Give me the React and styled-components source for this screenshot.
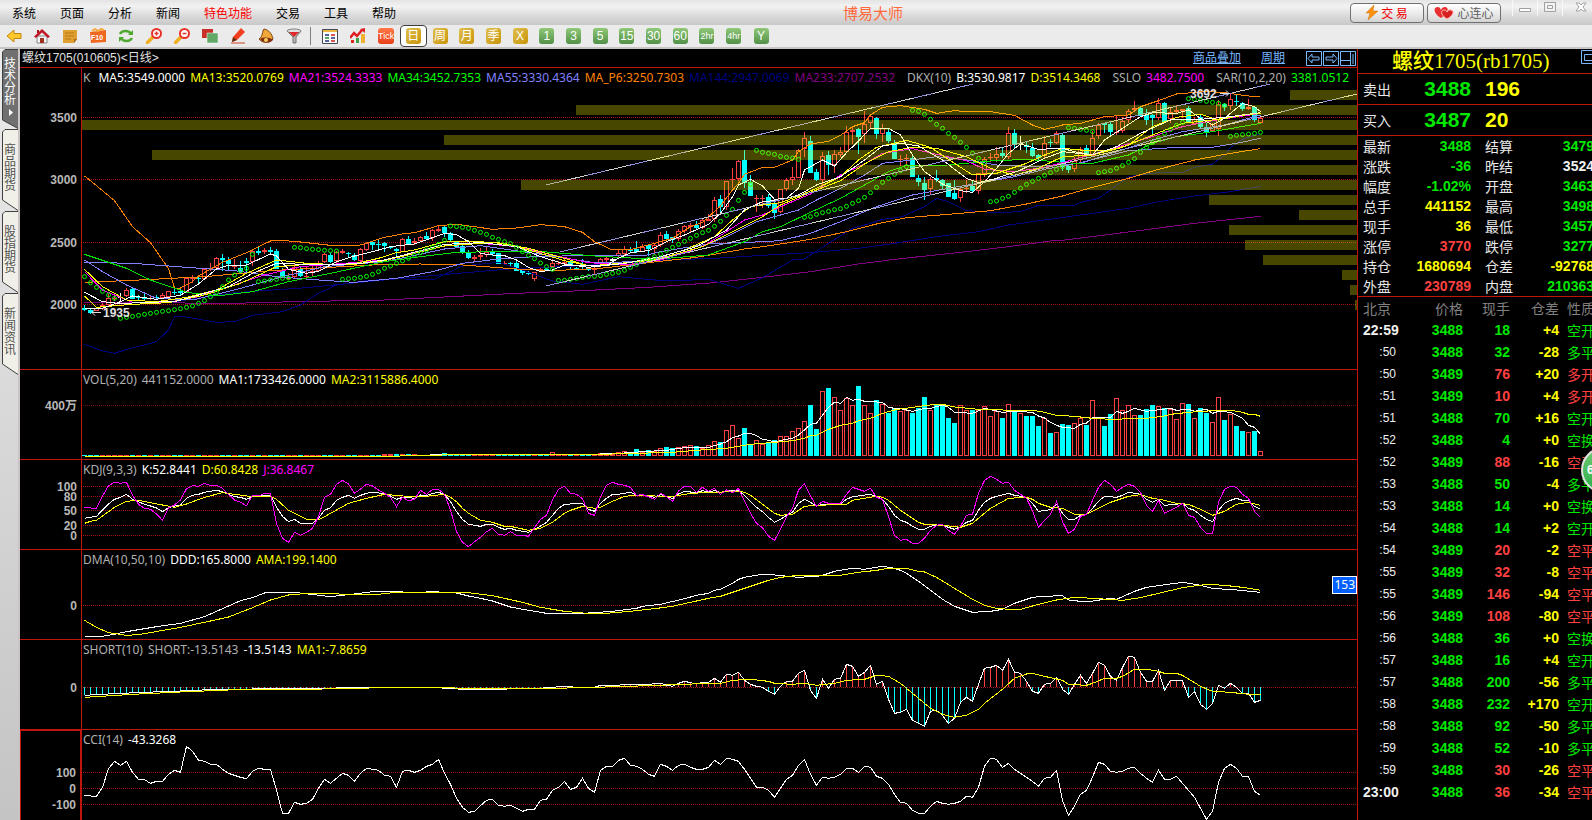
import React from "react";
import styled, { createGlobalStyle } from "styled-components";

const RED = "#c0140c";
const CJK = '"Noto Sans CJK SC", sans-serif';
const LEGEND = '"Noto Sans", sans-serif';

const GlobalStyle = createGlobalStyle`
  * {
    box-sizing: border-box;
  }
  body {
    margin: 0;
    background: #000;
    overflow: hidden;
    font-family: "Liberation Sans", ${CJK};
    font-size: 12px;
  }
  button {
    font-family: inherit;
    padding: 0;
    margin: 0;
    border: 0;
    background: none;
    cursor: pointer;
  }
`;

/* ---------- data ---------- */

// A series is a string of levels in thirds of a pixel, one per bar.
// "12:340" jumps to bar 12, the next plain value belongs to bar 13.
const parse = (text) => {
  let i = -1;
  return text
    .trim()
    .split(/\s+/)
    .map((token) => {
      const [a, b] = token.split(":");
      i = b === undefined ? i + 1 : Number(a);
      return [i, Number(b === undefined ? a : b)];
    });
};

const barX = (i) => 2 + i * 6;

const candles = `
c 735 743 750 753|c 747 750 758 762|r 742 745 752 754|r 730 735 747 750|r 702 715 735 740|r 705 714 718 724|w 700 710 712 725|r 683 691 708 710|c 683 687 716 718|c 704 712 714 720
c 698 713 716 720|r 708 714 718 720|c 704 711 714 716|r 698 706 714 716|r 692 694 712 712|c 688 696 700 704|c 684 693 700 708|r 650 653 697 697|r 645 652 656 668|c 644 653 657 668
r 623 626 656 660|r 610 623 628 632|r 590 595 623 625|c 582 595 601 634|c 592 600 613 630|r 598 615 622 626|c 602 624 636 640|c 595 603 610 640|r 566 572 606 618|c 562 572 578 585
r 565 571 577 582|c 560 569 576 578|c 568 573 627 627|c 624 632 650 652|r 640 650 656 660|r 612 620 650 655|c 622 626 648 650|r 622 648 652 656|r 610 633 636 648|r 602 608 633 636
r 578 583 607 610|c 580 584 606 610|r 574 577 604 610|r 568 574 580 582|c 575 578 583 595|c 580 584 601 603|r 563 568 604 608|r 546 548 570 572|c 545 545 555 570|c 540 551 555 568
c 547 549 558 575|c 558 560 565 566|c 565 568 574 592|r 533 538 575 577|c 528 538 551 553|r 534 542 549 556|r 528 530 543 547|c 515 528 537 540|r 508 511 535 543|r 497 507 512 516
c 497 501 520 530|c 516 519 541 545|c 543 546 560 562|c 555 559 580 582|c 570 577 593 598|r 585 590 598 606|r 563 585 590 600|r 562 576 586 590|c 568 576 581 588|c 578 580 611 612
r 603 608 612 615|c 606 610 613 620|c 603 609 632 634|c 628 630 640 645|c 632 639 642 646|r 635 637 656 663|r 624 628 634 636|c 622 627 630 632|r 597 610 622 625|r 604 608 612 614
r 596 606 612 615|c 600 604 622 626|c 620 623 626 628|c 596 612 616 628|c 620 621 630 632|r 622 625 630 644|r 595 598 614 620|r 592 594 599 615|w 594 598 602 606|r 568 580 588 594
r 558 567 582 584|c 562 566 573 578|c 543 567 576 580|r 552 560 575 576|c 554 556 568 588|r 552 556 568 585|r 516 524 556 560|c 513 522 536 545|c 530 532 541 548|r 508 512 538 542
r 496 498 512 518|r 490 496 500 516|c 483 495 504 508|r 478 480 503 506|r 462 477 482 484|r 412 421 478 486|c 405 417 441 458|r 363 364 440 450|r 324 357 360 384|r 300 303 356 362
c 270 300 370 385|c 345 365 408 408|r 405 415 418 457|r 405 413 418 443|c 403 412 438 444|c 425 432 458 476|r 386 388 455 458|r 354 361 386 394|r 320 351 360 376|r 268 271 353 355
r 216 235 266 292|c 227 243 339 339|c 328 335 360 362|r 277 288 361 375|c 273 285 316 344|r 270 283 315 338|r 262 276 284 290|r 198 216 276 278|r 198 210 215 253|c 203 207 230 283
r 152 192 222 250|r 164 168 188 205|c 170 174 222 237|r 192 204 222 245|c 205 215 243 250|c 240 250 298 298|r 285 296 300 318|r 282 293 297 316|c 285 293 350 350|c 345 353 366 377
c 352 369 389 420|r 350 357 386 406|c 330 354 361 366|c 357 360 377 390|c 368 370 411 411|c 360 398 416 420|r 380 386 414 426|r 360 384 388 400|c 360 378 394 396|r 338 340 393 402
r 292 296 341 350|r 280 290 294 307|r 262 281 294 305|c 265 278 288 295|r 200 219 290 296|c 207 219 254 268|w 228 250 252 270|c 246 254 262 278|c 248 263 288 290|c 282 285 293 302
r 228 250 289 297|c 236 246 248 262|r 214 220 250 252|c 222 226 320 332|c 312 317 330 338|r 292 304 326 335|r 262 267 300 306|c 256 264 286 294|r 214 235 288 292|r 190 195 227 237
c 188 190 194 220|c 187 192 216 232|r 168 216 220 226|r 172 182 212 220|r 148 154 180 188|r 122 144 150 156|c 138 144 168 172|c 146 165 180 196|c 162 164 174 222|r 114 129 174 180
c 125 129 185 188|r 142 156 176 188|r 136 149 155 162|r 146 148 154 174|c 138 144 185 190|r 172 176 192 195|c 162 170 202 205|c 190 201 216 232|r 190 192 212 216|r 120 132 206 228
c 128 132 141 152|r 98 117 137 150|c 104 122 126 138|c 125 129 147 152|r 116 141 148 150|c 138 140 180 186|r 170 174 188 190`
  .trim()
  .split(/[|\n]/)
  .map((row) => {
    const [kind, ...levels] = row.split(" ");
    return { kind, levels: levels.map(Number) };
  });

const priceLines = [
  { color: "#800080", data: "0:727 25:730 35:725 50:720 61:710 72:700 83:692 94:682 105:668 113:652 121:635 129:612 135:598 146:577 154:560 161:543 163:541 174:516 185:490 196:469" },
  { color: "#000080", data: "14:728 25:698 37:683 50:660 61:642 72:625 80:620 89:610 97:600 105:595 113:586 121:578 129:565 135:550 142:530 149:515 154:495 160:480 168:460 174:445 179:425 185:408 191:395 196:379" },
  { color: "#000080", data: "0:853 3:873 5:880 7:868 11:850 12:845 14:810 15:770 16:768 22:787 25:785 28:766 33:755 36:735 39:700 42:675 47:662 52:656 58:660 63:618 69:607 73:630 78:663 83:673 89:650 97:663 104:658 109:685 113:653 118:600 120:597 124:550 128:505 131:490 133:478 136:472 140:440 142:415 144:425 147:452 152:458 156:455 159:436 165:436 166:427 169:415 171:390 174:350 179:338 183:338 185:322 188:312 190:285 191:262 193:238 195:226 224" },
  { color: "#ff8000", data: "0:667 8:661 20:650 31:632 43:620 50:613 56:612 63:615 72:627 78:632 86:625 94:608 102:592 110:567 113:560 116:552 121:538 127:515 132:492 137:473 144:463 151:452 157:432 163:408 168:382 174:355 179:328 185:300 191:280 196:266" },
  { color: "#ff8000", data: "0:348 362 5:422 8:500 11:548 14:626 684 684 18:665 19:648 23:607 27:578 31:543 541 35:544 42:558 46:555 50:532 53:522 55:518 57:508 59:497 62:493 65:500 68:508 72:504 76:494 80:500 83:517 85:545 88:570 91:569 95:550 98:535 101:500 103:487 104:470 106:438 108:390 109:370 110:343 113:322 115:322 118:300 119:275 121:252 124:244 126:226 128:200 130:188 131:165 133:142 136:137 140:148 142:160 145:152 147:155 151:155 155:166 158:195 160:208 162:200 195 166:190 170:170 174:165 176:140 179:122 182:102 187:94 190:98 194:108 196:109" },
  { color: "#8080ff", data: "0:607 8:610 17:622 25:632 32:650 39:660 45:667 52:655 58:635 63:610 69:597 75:590 82:587 93:588 96:575 104:552 113:545 116:542 121:520 126:485 132:440 138:405 144:385 149:370 155:350 160:328 166:308 170:290 174:272 182:262 188:262 192:250 196:235" },
  { color: "#8080ff", data: "0:600 3:635 7:675 12:715 18:720 25:690 33:650 40:620 50:605 60:567 66:557 75:580 85:608 92:605 100:580 107:530 112:485 116:465 119:450 122:420 126:385 130:345 133:310 137:302 142:290 147:300 152:315 158:320 166:310 172:275 178:240 183:215 190:195 196:165" },
  { color: "#00e000", data: "0:583 7:625 11:660 17:697 22:708 28:695 34:665 41:640 50:605 56:590 62:577 75:573 85:588 95:598 104:585 110:545 113:515 116:500 121:457 126:415 130:375 134:335 137:316 144:315 151:303 157:298 165:310 168:310 174:285 178:250 182:230 188:215 196:190" },
  { color: "#ff00ff", data: "0:635 3:690 5:705 8:727 14:727 19:710 24:680 30:645 36:620 42:612 50:600 60:558 66:550 72:560 78:585 84:608 90:615 96:600 103:560 107:515 110:480 113:465 116:440 121:402 126:345 130:312 133:280 138:266 142:283 147:302 150:328 155:335 160:322 163:308 168:283 172:262 177:235 183:200 188:182 196:160" },
  { color: "#ffff00", data: "0:708 2:742 8:733 14:728 20:705 26:670 32:620 38:612 44:615 50:602 60:558 68:547 74:565 80:595 84:618 88:612 95:600 103:560 108:515 113:470 116:435 121:397 126:362 130:312 134:275 138:262 142:265 147:290 151:325 155:346 159:325 163:290 168:285 173:262 178:225 183:190 188:180 196:158" },
  { color: "#ffff00", data: "0:628 3:680 7:720 12:725 17:712 22:690 27:640 32:600 37:610 44:615 49:595 52:578 55:570 60:545 64:543 70:550 75:575 80:602 85:620 90:610 95:595 100:570 105:530 108:480 111:440 116:428 119:408 122:385 126:350 129:300 132:262 137:241 141:262 145:310 148:345 152:340 157:310 160:285 163:265 166:270 171:270 174:255 178:200 182:172 186:163 189:180 193:165 196:160" },
  { color: "#ffffff", data: "0:697 3:725 6:731 10:727 15:725 19:705 24:680 28:640 32:610 35:612 40:615 46:610 50:600 60:553 66:548 72:560 76:590 80:612 84:622 90:610 96:590 102:560 107:510 110:450 113:425 116:420 119:405 122:375 126:350 130:300 133:258 136:250 139:258 143:300 147:355 149:368 152:355 156:330 160:295 163:275 168:285 172:260 176:220 181:180 186:178 190:172 196:158" },
  { color: "#ffffff", data: "0:744 3:745 6:725 8:708 12:718 16:706 19:672 22:627 24:616 27:615 31:582 588 34:628 37:640 39:634 42:605 45:588 48:575 51:560 55:552 58:533 60:520 62:524 64:545 66:580 68:585 70:587 72:600 74:622 76:635 78:630 80:615 84:618 87:616 89:595 91:578 94:572 97:545 100:525 104:493 106:460 108:410 375 111:358 113:378 115:418 117:415 119:385 330 122:310 300 125:318 127:278 129:243 131:205 134:205 136:225 138:285 140:335 143:372 146:392 148:397 150:365 152:325 154:280 156:252 159:268 163:265 165:275 168:285 170:240 173:205 176:170 178:158 182:160 184:150 186:175 188:195 190:175 192:145 131 195:140 155" },
];

const sar = `650 668 682 694 705 715 775 772 769 766 763 760 757 754 752 749 746 742 738 730 722 710 697 680 660 645 633 625 583 665 663 660 658 655 654
562 563 566 568 569 571 572 573 658 656 655 652 649 643 635 625 618 610 603 595 586 578 570 562 553 541 498 500 502 505 511 517 523 532 538 545 551 562 575 586 596 609 620 628
661 661 658 655 652 649 649 647 643 640 637 631 622 613 604 598 590 582 571 562 553 544 535 526 518 511 499 484 466 448 421 397 373 271 277 280 283 289 292 294 298
472 470 463 458 454 449 446 439 430 422 412 398 382 367 355 343 332 320 151 154 163 178 193 205 220 232 247 262 280 295 308 425 423 415 409 397 385 373 364 355 346 338 328 320
203 205 208 211 215 338 335 332 325 317 307 296 277 262 248 236 220 209 196 187 116 118 121 124 127 130 137 229 226 224 222 220 217`;

// [top of the band, x where it starts]
const bands = [
  [22, 1208], [37, 494], [52, 0], [67, 362], [82, 70], [97, 774], [112, 439], [127, 1127],
  [142, 1217], [157, 1147], [172, 1163], [187, 1181], [202, 1260], [217, 1268], [232, 1273],
];

const trends = [
  [464, 117, 891, 16],
  [478, 184, 1188, 16],
  [464, 218, 1275, 26],
];

const volumes = `c255 c255 c255 r255 r255 r255 r255 r255 c255 r255 c255 r255 c255 r255 r255 c255 c255 r255 r255 c255 r255 r255 r255 c255 c255 r255 c255 c255 r255 c255
r255 c255 c255 c255 r255 r255 c255 r255 r255 r255 c255 c255 r255 r255 c255 c255 r254 r254 c254 c254 r253 r253 c253 r252 c253 r252 c254 c254 r254 r253 c250 c254
c254 c254 c254 r254 r252 r254 r254 c254 c254 c253 c253 c253 c253 r253 c253 c253 r247 r253 r253 c253 r253 c253 c253 r253 r250 r250 r252 r247 r244 c248
c237 r246 c240 r244 r235 c231 c235 r232 r229 r226 c229 r235 r226 r214 c216 r181 r166 r205 c174 c223 r211 r221 c217 c211 r199 r199 r184 r175 r154 c105
c177 r64 c54 r82 r121 r83 r106 c48 r106 r130 c90 r103 c129 c117 r124 r121 c129 c114 c81 r121 c103 c105 c144 c159 r106 r121 c120 r121 r109 r139
r124 c144 r103 c124 r130 c138 c138 c168 r145 c189 r187 c162 c165 r160 r145 c165 r91 r142 c168 c132 r85 r121 r106 r136 c135 c117 c105 r109 c114 r118
r148 r100 c102 r145 c114 c129 r157 r82 c150 r133 c168 c183 r187 c183 r244`
  .trim()
  .split(/\s+/)
  .slice(-197)
  .map((token) => [token[0], Number(token.slice(1))]);

const volLines = [
  { color: "#ffffff", data: "0:260 52:260 53:257 60:254 86:252 90:249 93:245 97:241 100:233 104:232 106:222 215 203 198 190 190 197 208 211 216 212 208 205 195 180 163 160 135 112 97 100 82 91 88 94 94 96 97 112 115 116 138:124 140:115 141:115 143:105 144:112 145:127 148:130 150:115 153:127 155:124 158:127 138 144 157 166 172 165:175 166:163 159 144 171:142 124 130 124 115 177:124 181:115 121 184:118 124 187:118 130 124 191:127 193:145 166 172 193" },
  { color: "#ffff00", data: "0:260 52:260 53:257 63:254 86:253 92:250 98:247 102:241 107:235 111:223 115:217 118:212 120:205 197 196 124:178 126:166 128:160 152 131:145 133:130 135:120 117 138:112 140:107 142:103 103 145:111 149:118 155:121 158:121 160:127 162:136 165:139 168:145 171:148 177:145 180:138 133 184:127 188:122 191:121 193:127 133 133 139" },
];

const kdjLines = [
  { color: "#ffffff", data: "445 442 439 420 402 388 382 373 388 395 403 408 414 425 413 408 405 385 376 373 367 364 361 365 373 380 382 388 380 379 377 375 412 439 455 448 460 460 460 445 421 413 391 382 376 385 376 370 367 369 372 378 388 382 383 385 375 376 371 367 373 395 425 448 463 466 469 463 463 472 478 475 481 484 487 478 468 457 436 415 403 83:400 418 424 400 385 373 373 91:367 376 376 95:382 374 379 386 372 364 102:368 362 366 362 367 363 109:362 376 394 412 425 442 457 448 436 427 400 388 397 408 403 126:402 388 380 131:373 380 388 409 436 451 457 469 478 478 469 466 466 472 478 470 457 451 421 397 385 379 154:370 376 157:382 400 424 161:419 403 430 448 448 436 433 415 394 379 172:382 376 367 176:373 388 397 388 406 182:403 400 415 421 436 448 455 421 400 391 385 391 391 409 418" },
  { color: "#ffff00", data: "0:460 454 451 5:412 7:394 9:391 13:405 15:412 17:402 20:382 23:368 25:373 28:380 31:378 388 34:421 37:448 39:450 41:430 44:400 47:385 50:373 53:378 57:379 60:373 382 395 415 430 66:451 68:457 70:469 469 74:481 76:475 78:457 80:430 421 83:409 85:415 412 88:394 90:379 92:376 98:380 101:370 105:367 109:364 367 376 113:403 115:430 436 118:433 120:409 122:406 127:403 391 130:385 132:379 382 391 136:421 139:457 463 143:466 146:472 148:460 151:415 154:385 157:382 388 400 161:412 163:415 165:433 167:433 169:415 171:397 174:379 176:374 178:385 180:391 182:400 184:403 186:418 188:436 190:424 192:403 194:397 196:406" },
  { color: "#ff00ff", data: "412 414 415 378 347 337 340 337 375 403 415 418 432 451 413 405 390 356 347 349 340 347 346 355 373 390 397 407 376 378 370 370 460 505 517 487 496 487 475 440 382 373 343 331 342 370 357 343 348 360 370 382 410 382 392 388 361 373 358 358 373 420 485 517 530 515 502 485 475 493 496 485 496 496 499 473 448 436 390 358 349 370 373 386 430 436 380 346 337 343 346 352 376 374 380 388 370 380 394 363 349 349 367 352 364 355 373 360 368 355 394 430 460 473 499 511 478 440 415 360 341 378 409 394 400 400 400 373 352 358 364 355 382 388 440 496 511 508 520 520 505 481 466 463 481 493 469 436 433 370 331 319 328 340 337 361 373 385 422 472 451 433 395 455 490 478 439 433 391 352 331 343 364 352 343 349 367 406 424 391 430 421 412 400 436 442 472 490 490 397 358 349 352 373 385 424 442" },
];

const dmaLines = [
  { color: "#ffffff", data: "0:799 3:799 5:793 7:785 12:770 16:760 20:740 24:708 26:692 28:683 30:669 667 35:667 41:680 45:672 48:665 52:665 55:668 58:665 62:669 64:678 66:685 68:693 71:711 74:721 77:730 84:729 88:724 92:715 709 96:703 100:686 102:676 104:670 661 658 108:640 628 622 113:613 115:615 119:622 122:619 616 125:604 128:595 130:598 133:589 135:595 601 610 139:634 143:688 145:709 148:727 151:724 153:718 155:700 158:682 160:679 163:677 164:690 166:694 696 171:685 688 175:664 177:652 179:647 183:637 186:646 188:655 192:660 196:667" },
  { color: "#ffff00", data: "0:751 2:772 4:788 7:796 9:794 16:772 20:757 24:741 28:713 31:690 34:675 36:672 41:670 43:673 49:673 52:667 57:667 62:667 64:668 68:677 70:685 73:697 76:712 80:724 83:729 87:730 91:724 95:716 98:709 101:697 104:685 106:679 109:661 112:643 114:631 116:622 119:616 126:616 129:607 132:601 134:595 137:595 139:604 606 142:622 145:655 148:688 150:706 152:715 154:718 156:718 159:703 162:690 165:682 168:685 173:691 176:683 179:670 183:653 187:643 190:646 193:652 196:661" },
];

const shortLines = [
  { color: "#ffffff", data: "0:976 5:971 10:967 16:963 22:958 28:957 38:956 42:954 48:952 58:952 62:957 66:958 75:956 80:949 82:952 85:952 946 89:946 943 945 94:943 96:940 945 949 940 934 102:942 937 937 925 937 913 916 907 931 943 949 952 964 973 949 934 934 910 901 961 985 928 955 928 925 883 889 919 907 886 943 934 988 1030 1027 1018 1051 1060 1069 1024 1021 1036 1060 1045 997 982 994 943 895 892 886 901 868 907 910 934 964 970 943 940 922 958 973 943 916 940 910 877 886 919 931 892 859 862 907 934 934 901 961 931 931 931 982 964 1003 1018 1000 946 955 940 952 970 970 997 991" },
  { color: "#ffff00", data: "0:982 8:973 16:966 24:960 32:958 40:957 50:953 60:953 65:956 76:956 85:952 96:946 99:943 106:940 108:931 111:928 114:934 940 118:943 120:940 122:946 125:940 127:931 130:928 132:916 134:919 136:940 138:970 141:1015 143:1033 145:1042 147:1036 149:1018 1000 153:958 155:925 157:912 910 160:919 163:931 943 167:946 940 170:925 172:925 919 175:898 177:898 179:904 910 182:910 916 186:949 188:964 191:967 194:973 196:973" },
];

const cciLines = [
  { color: "#ffffff", data: "1276 1278 1279 1252 1196 1174 1186 1174 1207 1228 1229 1240 1234 1234 1213 1201 1207 1129 1144 1171 1174 1183 1183 1198 1210 1216 1222 1226 1204 1195 1198 1199 1260 1330 1330 1297 1303 1300 1288 1255 1228 1240 1225 1210 1216 1234 1210 1195 1198 1201 1216 1219 1252 1204 1201 1207 1201 1189 1183 1168 1210 1243 1285 1312 1327 1324 1307 1291 1288 1306 1309 1306 1315 1324 1318 1318 1291 1288 1261 1252 1235 1258 1252 1225 1255 1267 1201 1189 1189 1171 1165 1186 1189 1198 1213 1219 1183 1189 1201 1186 1183 1192 1198 1198 1192 1171 1183 1165 1168 1174 1198 1225 1252 1252 1261 1282 1255 1228 1216 1186 1168 1213 1246 1222 1225 1222 1213 1195 1195 1207 1189 1192 1219 1225 1243 1273 1297 1300 1321 1330 1330 1309 1294 1300 1303 1300 1294 1279 1282 1252 1189 1165 1168 1192 1180 1198 1210 1222 1234 1249 1225 1222 1201 1291 1336 1309 1273 1261 1222 1177 1183 1204 1207 1204 1195 1192 1210 1225 1237 1201 1228 1228 1219 1240 1261 1282 1315 1348 1324 1237 1195 1183 1195 1219 1219 1264 1276" },
];

/* ---------- title bar ---------- */

const Window = styled.div`
  min-height: 100vh;
  display: flex;
  flex-direction: column;
  overflow: hidden;
  position: relative;
`;

const TitleBar = styled.header`
  height: 25px;
  display: flex;
  align-items: center;
  background: linear-gradient(#e4e4e4, #f2f2f2 25%, #dcdcdc 60%, #c8c8c8);
`;

const Menu = styled.nav`
  display: flex;
  gap: 24px;
  padding-left: 12px;
`;

const MenuItem = styled.button`
  font: 12px/16px ${CJK};
  color: ${(props) => (props.$hot ? "#ff0000" : "#000")};
`;

const AppName = styled.h1`
  flex: 1;
  margin: 0;
  text-align: center;
  font: 15px/20px ${CJK};
  color: #ff6a3c;
`;

const TitleButton = styled.button`
  width: 74px;
  height: 20px;
  margin-right: 3px;
  display: flex;
  align-items: center;
  justify-content: center;
  gap: 3px;
  border: 1px solid #707070;
  border-radius: 4px;
  background: linear-gradient(#fff, #ececec 50%, #d4d4d4);
  font: 12px/16px ${CJK};
  color: ${(props) => props.$color};
`;

const WindowButtons = styled.div`
  display: flex;
  gap: 1px;
  margin-left: 8px;
  height: 25px;
`;

const WindowButton = styled.button`
  width: 24px;
  height: 16px;
  border-left: 1px solid #f8f8f8;
  &:last-child {
    width: 30px;
    padding-left: 6px;
  }
`;

/* ---------- toolbar ---------- */

const ToolBar = styled.div`
  height: 24px;
  display: flex;
  align-items: flex-start;
  background: #ebebeb;
  border-bottom: 2px solid #cac4c4;
`;

const Tool = styled.button`
  width: 28px;
  height: 22px;
  display: flex;
  align-items: center;
  justify-content: center;
`;

const Divider = styled.span`
  width: 1px;
  height: 18px;
  margin: 2px 5px 0 2px;
  background: #808080;
`;

const Periods = styled.div`
  display: grid;
  grid-template-columns: repeat(13, 1fr);
  width: 347px;
`;

const Period = styled.button`
  height: 22px;
  display: flex;
  align-items: center;
  justify-content: center;
  border: ${(props) => (props.$active ? "1px solid #404040" : "0")};
  border-radius: 4px;
  background: ${(props) => (props.$active ? "#fff" : "none")};
`;

const Tile = styled.span`
  width: ${(props) => (props.$tone === "red" ? 16 : 15)}px;
  height: 16px;
  border-radius: 3px;
  font: ${(props) => (props.$small ? 9 : 12)}px/16px "Liberation Sans", ${CJK};
  text-align: center;
  color: #fff;
  background: ${(props) =>
    ({
      gold: "linear-gradient(135deg, #e0c050, #c89408)",
      green: "linear-gradient(#90c878, #529048)",
      red: "linear-gradient(#ff7848, #e84018)",
    }[props.$tone])};
`;

/* ---------- side tabs ---------- */

const Body = styled.div`
  flex: 1;
  display: flex;
  min-height: 771px;
`;

const SideBar = styled.nav`
  flex: 0 0 20px;
  padding-left: 2px;
  background: linear-gradient(#ebebeb, #c4c4c4);
  border-right: 2px solid #cac4c4;
`;

const SideTab = styled.button`
  position: relative;
  display: flex;
  flex-direction: column;
  align-items: center;
  width: 16px;
  height: ${(props) => (props.$active ? 80 : 82)}px;
  padding-top: ${(props) => (props.$active ? 8 : 14)}px;
  font: 12px/12px ${CJK};
  color: ${(props) => (props.$active ? "#fff" : "#505050")};
  svg {
    position: absolute;
    inset: 0;
  }
  span {
    position: relative;
    width: 12px;
    overflow-wrap: anywhere;
  }
`;

/* ---------- charts ---------- */

const Charts = styled.main`
  flex: 1;
  min-width: 0;
  display: flex;
  flex-direction: column;
`;

const ChartTitle = styled.div`
  height: 18px;
  display: flex;
  align-items: center;
  padding: 0 1px 0 2px;
  font: 12px/16px "Liberation Sans", ${CJK};
  color: #e0e0e0;
`;

const ChartLink = styled.a`
  margin-right: 20px;
  color: #78b8ff;
  &:first-of-type {
    margin-left: auto;
  }
`;

const TitleIcon = styled.button`
  width: 16px;
  height: 15px;
  margin-left: 1px;
  svg {
    display: block;
  }
`;

const PaneRow = styled.section`
  display: flex;
  flex: ${(props) => (props.$fill ? "1 0 auto" : "none")};
  height: ${(props) => props.$height}px;
  border-top: 1px solid ${RED};
`;

const Axis = styled.div`
  position: relative;
  flex: 0 0 62px;
  border: solid ${RED};
  border-width: ${(props) => (props.$selected ? "1px 2px 0 1px" : "0 1px 0 0")};
`;

const AxisLabel = styled.span`
  position: absolute;
  right: 4px;
  font: bold 12px/10px "Liberation Sans", ${CJK};
  color: #b8b8b8;
`;

const Plot = styled.div`
  position: relative;
  flex: 1;
  min-width: 0;
  overflow: hidden;
`;

const Canvas = styled.svg`
  position: absolute;
  inset: 0;
  width: 100%;
  height: 100%;
`;

const Legend = styled.div`
  position: relative;
  display: flex;
  gap: 5px;
  padding: 1px 0 0 1px;
  white-space: nowrap;
  font: 12px/18px ${LEGEND};
`;

const LegendItem = styled.span`
  color: ${(props) => props.$color};
  margin-left: ${(props) => props.$space || 0}px;
`;

const PriceTag = styled.span`
  position: absolute;
  right: 0;
  top: 26px;
  height: 18px;
  padding: 0 1px;
  border: 1px solid #fff;
  background: #0060ff;
  color: #fff;
  font: 12px/16px ${LEGEND};
`;

const Line = ({ color, data, base }) => (
  <polyline
    fill="none"
    stroke={color}
    shapeRendering="crispEdges"
    points={parse(data)
      .map(([i, level]) => `${barX(i) + 0.5},${base + level / 3}`)
      .join(" ")}
  />
);

const Grid = ({ levels, color = "#a01414" }) =>
  levels.map((y) => (
    <line key={y} x1="1" x2="100%" y1={y + 0.5} y2={y + 0.5} stroke={color} strokeDasharray="1 1" />
  ));

const Pane = ({ height, fill, selected, axis, legend, lines, base, grid, gridColor, tag, children, after }) => (
  <PaneRow $height={height} $fill={fill}>
    <Axis $selected={selected}>
      {axis.map(([label, y]) => (
        <AxisLabel key={label} style={{ top: y - 5 - (selected ? 1 : 0) }}>
          {label}
        </AxisLabel>
      ))}
    </Axis>
    <Plot>
      <Canvas aria-hidden="true">
        <Grid levels={grid} color={gridColor} />
        {children}
        {lines.map((line, i) => (
          <Line key={i} {...line} base={base} />
        ))}
        {after}
      </Canvas>
      <Legend>
        {legend.map(([text, color, space]) => (
          <LegendItem key={text} $color={color} $space={space}>
            {text}
          </LegendItem>
        ))}
      </Legend>
      {tag && <PriceTag>{tag}</PriceTag>}
    </Plot>
  </PaneRow>
);

const kinds = { c: "#00ffff", r: "#ff4040", w: "#ffffff" };

const Candles = () =>
  candles.map(({ kind, levels }, i) => {
    const [high, top, bottom, low] = levels.map((v) => Math.round(v / 3) - 8);
    const color = kinds[kind];
    const h = Math.max(1, bottom - top);
    return (
      <g key={i} fill={color} shapeRendering="crispEdges">
        <rect x={barX(i)} y={high} width="1" height={Math.max(0, top - high)} />
        <rect x={barX(i)} y={bottom} width="1" height={Math.max(0, low - bottom)} />
        {kind === "r" && h > 2 ? (
          <rect x={barX(i) - 1.5} y={top + 0.5} width="4" height={h - 1} fill="#000" stroke={color} />
        ) : (
          <rect x={barX(i) - 2} y={top} width="5" height={h} />
        )}
      </g>
    );
  });

const VolumeBars = () =>
  volumes.map(([kind, level], i) => {
    const top = Math.round(level / 3);
    const h = 86 - top;
    return kind === "r" && h > 2 ? (
      <rect key={i} x={barX(i) - 1.5} y={top + 0.5} width="4" height={h - 1} fill="#000" stroke={kinds.r} shapeRendering="crispEdges" />
    ) : (
      <rect key={i} x={barX(i) - 2} y={top} width="5" height={h} fill={kinds[kind]} />
    );
  });

const ShortBars = () => {
  const points = parse(shortLines[0].data);
  return Array.from({ length: 197 }, (_, i) => {
    const next = points.findIndex(([x]) => x >= i);
    const [x1, y1] = points[next];
    const [x0, y0] = points[Math.max(0, next - 1)];
    const level = x1 === i ? y1 : y0 + ((y1 - y0) * (i - x0)) / (x1 - x0);
    const y = level / 3 - 270;
    return (
      <rect
        key={i}
        x={barX(i)}
        y={Math.min(y, 47)}
        width="1"
        height={Math.abs(47 - y)}
        fill={y < 47 ? kinds.r : kinds.c}
        shapeRendering="crispEdges"
      />
    );
  });
};

/* ---------- quote panel ---------- */

const Quote = styled.aside`
  position: relative;
  flex: 0 0 235px;
  overflow: hidden;
  border-left: 1px solid ${RED};
`;

const QuoteTitle = styled.h2`
  height: 25px;
  margin: 0;
  padding-left: 34px;
  border-bottom: 1px solid ${RED};
  font: 500 21px/24px "Liberation Serif", ${CJK};
  white-space: nowrap;
  color: #ffff00;
`;

const QuoteIcon = styled.svg`
  position: absolute;
  top: 1px;
  right: -5px;
`;

const Offer = styled.div`
  height: 31px;
  display: grid;
  grid-template-columns: 40px 68px 1fr;
  align-items: center;
  padding-left: 5px;
  border-bottom: 1px solid ${RED};
  color: #e8e8e8;
  font: 14px/20px ${CJK};
`;

const BigNumber = styled.strong`
  font: bold 21px/24px "Liberation Sans", sans-serif;
  text-align: right;
  color: #00e800;
`;

const Amount = styled(BigNumber)`
  text-align: left;
  padding-left: 14px;
  color: #ffff00;
`;

const Stats = styled.table`
  width: 236px;
  table-layout: fixed;
  border-collapse: collapse;
  th,
  td {
    height: 20px;
    padding: 0;
    white-space: nowrap;
  }
  th {
    width: 45px;
    padding-left: 5px;
    text-align: left;
    font: 14px/20px ${CJK};
    color: #e8e8e8;
  }
  td + th {
    width: 55px;
    padding-left: 14px;
  }
`;

const tones = { g: "#00e800", r: "#ff4040", y: "#ffff00", w: "#f0f0f0" };

const Num = styled.td`
  text-align: right;
  font: bold 14px/20px "Liberation Sans", sans-serif;
  color: ${(props) => tones[props.$tone]};
`;

const Ticks = styled.table`
  width: 241px;
  table-layout: fixed;
  border-collapse: collapse;
  border-top: 1px solid ${RED};
  th,
  td {
    height: 22px;
    padding: 0;
    white-space: nowrap;
  }
  th {
    font: 14px/20px ${CJK};
    text-align: right;
    color: #808080;
  }
  th:first-child {
    padding-left: 5px;
    text-align: left;
  }
  th:last-child {
    padding-left: 8px;
    text-align: left;
  }
`;

const Time = styled.td`
  text-align: ${(props) => (props.$full ? "left" : "right")};
  font: ${(props) => (props.$full ? "bold 14px" : "12px")} "Liberation Sans", sans-serif;
  color: #f0f0f0;
  && {
    padding-left: 5px;
    padding-right: ${(props) => (props.$full ? 0 : 2)}px;
  }
`;

const Nature = styled.td`
  font: 14px/20px ${CJK};
  color: ${(props) => tones[props.$tone]};
  && {
    padding-left: 8px;
  }
`;

const Badge = styled.button`
  position: absolute;
  top: 447px;
  right: -35px;
  width: 46px;
  height: 46px;
  padding-left: 4px;
  border: 2px solid #e0e0e0;
  border-radius: 50%;
  background: linear-gradient(#70c870, #2cb04c);
  text-align: left;
  font: bold 12px/16px "Liberation Sans", sans-serif;
  color: #fff;
`;

const stats = [
  ["最新", "3488", "g", "结算", "3479", "g"],
  ["涨跌", "-36", "g", "昨结", "3524", "w"],
  ["幅度", "-1.02%", "g", "开盘", "3463", "g"],
  ["总手", "441152", "y", "最高", "3498", "g"],
  ["现手", "36", "y", "最低", "3457", "g"],
  ["涨停", "3770", "r", "跌停", "3277", "g"],
  ["持仓", "1680694", "y", "仓差", "-92768", "y"],
  ["外盘", "230789", "r", "内盘", "210363", "g"],
];

const ticks = [
  ["22:59", 3488, 18, "+4", "空开", "g"],
  [":50", 3488, 32, "-28", "多平", "g"],
  [":50", 3489, 76, "+20", "多开", "r"],
  [":51", 3489, 10, "+4", "多开", "r"],
  [":51", 3488, 70, "+16", "空开", "g"],
  [":52", 3488, 4, "+0", "空换", "g"],
  [":52", 3489, 88, "-16", "空平", "r"],
  [":53", 3488, 50, "-4", "多平", "g"],
  [":53", 3488, 14, "+0", "空换", "g"],
  [":54", 3488, 14, "+2", "空开", "g"],
  [":54", 3489, 20, "-2", "空平", "r"],
  [":55", 3489, 32, "-8", "空平", "r"],
  [":55", 3489, 146, "-94", "空平", "r"],
  [":56", 3489, 108, "-80", "空平", "r"],
  [":56", 3488, 36, "+0", "空换", "g"],
  [":57", 3488, 16, "+4", "空开", "g"],
  [":57", 3488, 200, "-56", "多平", "g"],
  [":58", 3488, 232, "+170", "空开", "g"],
  [":58", 3488, 92, "-50", "多平", "g"],
  [":59", 3488, 52, "-10", "多平", "g"],
  [":59", 3488, 30, "-26", "空平", "r"],
  ["23:00", 3488, 36, "-34", "空平", "r"],
];

/* ---------- toolbar icons ---------- */

const glyphs = {
  后退: <path d="M1 8 8 2v3.5h7v5H8V14z" fill="#ffc828" stroke="#c08810" />,
  首页: (
    <>
      <path d="M3 8h10v7H3z" fill="#f4f4f4" stroke="#888" />
      <path d="M3 2h2v3H3z" fill="#a01818" />
      <path d="M0 8.500 8 1l8 7.500-2 1.500-6-5.500L2 10z" fill="#c01828" />
      <path d="M6 10h4v5H6z" fill="#a03020" />
    </>
  ),
  公告: (
    <>
      <path d="M1 2h14v9l-3 4H1z" fill="#e0a030" />
      <path d="M15 11h-3v4z" fill="#a86810" />
      <path d="M3 5h9M3 8h9M3 11h6" stroke="#b87818" />
    </>
  ),
  F10资料: (
    <>
      <path d="m0 4 16-2v12l-15 1z" fill="#f06820" />
      <path d="m2 3 3-2 3 2 3-2 3 1" fill="none" stroke="#f8a840" strokeWidth="2" />
      <text x="1" y="12" fontSize="7" fontWeight="bold" fontFamily="Liberation Sans" fill="#fff">F10</text>
    </>
  ),
  刷新: (
    <g fill="none" stroke="#50a830" strokeWidth="2.500">
      <path d="M2 6c2-4 9-4 11 0M14 10c-2 4-9 4-11 0" />
      <path d="M15 2v5h-5zM1 14V9h5z" fill="#50a830" stroke="none" />
    </g>
  ),
  放大: (
    <>
      <path d="m7 9-6 6" stroke="#f0b020" strokeWidth="3.500" strokeLinecap="round" />
      <circle cx="10.500" cy="5.500" r="4.500" fill="#fff" stroke="#e83028" strokeWidth="2" />
      <path d="M8.500 5.500h4M10.500 3.500v4" stroke="#e83028" strokeWidth="1.500" />
    </>
  ),
  缩小: (
    <>
      <path d="m7 9-6 6" stroke="#f0b020" strokeWidth="3.500" strokeLinecap="round" />
      <circle cx="10.500" cy="5.500" r="4.500" fill="#fff" stroke="#e83028" strokeWidth="2" />
      <path d="M8.500 5.500h4" stroke="#e83028" strokeWidth="1.500" />
    </>
  ),
  叠加: (
    <>
      <path d="M0 1h11v9H0z" fill="#c83028" />
      <path d="M5 5h11v10H5z" fill="#60a868" stroke="#fff" strokeWidth=".5" />
    </>
  ),
  画线: (
    <>
      <path d="m3 9 8-9 4 4-8 8-5 2z" fill="#f04020" />
      <path d="m3 9 4 3-5 2z" fill="#603010" />
      <path d="M1 15h14" stroke="#d04020" />
    </>
  ),
  预警: (
    <>
      <path d="M1 11C5 9 4 3 6 1c5 1 8 5 9 10-4 5-11 4-14 0z" fill="#f0a838" stroke="#804010" />
      <path d="M2 11c4-2 9-2 13 1-4 4-10 3-13-1z" fill="#803010" />
      <circle cx="8" cy="12" r="2" fill="#f8d060" />
    </>
  ),
  筛选: (
    <>
      <path d="m1 3 6 6v6h3V9l5-6z" fill="#b8b8b8" stroke="#707070" />
      <ellipse cx="8" cy="3" rx="7" ry="2" fill="#e0e0e0" stroke="#808080" />
      <path d="M3 4h10L8 9z" fill="#e02828" />
    </>
  ),
  报价: (
    <>
      <path d="M.500 1.500h15v14H.500z" fill="#fff" stroke="#404858" />
      <path d="M1 2h14v2H1z" fill="#f0b840" />
      <path d="M3 7h4M3 13h4M9 10h4" stroke="#203080" strokeWidth="1.500" />
      <path d="M9 7h4M9 13h4" stroke="#d02020" strokeWidth="1.500" />
      <path d="M3 10h4" stroke="#209030" strokeWidth="1.500" />
    </>
  ),
  走势: (
    <>
      <path d="M1 12h3v3H1z" fill="#d82820" />
      <path d="M6 10h3v5H6z" fill="#40a040" />
      <path d="M11 6h4v9h-4z" fill="#f0b030" />
      <path d="m0 10 4-5 3 3 5-6" fill="none" stroke="#e02020" strokeWidth="2.500" />
      <path d="M15 0v5l-5-4z" fill="#e02020" />
    </>
  ),
};

const Icon = ({ name }) => (
  <svg width="16" height="16" viewBox="0 0 16 16" aria-hidden="true">
    {glyphs[name]}
  </svg>
);

const names = Object.keys(glyphs);
const periods = ["日", "周", "月", "季", "X", "1", "3", "5", "15", "30", "60", "2hr", "4hr", "Y"];

const sideTabs = ["技术分析", "商品期货", "股指期货", "新闻资讯"];

const white = "#ffffff";
const yellow = "#ffff00";
const gray = "#b0b0b0";

export default function App() {
  return (
    <Window>
      <GlobalStyle />
      <TitleBar>
        <Menu>
          {["系统", "页面", "分析", "新闻", "特色功能", "交易", "工具", "帮助"].map((item) => (
            <MenuItem key={item} $hot={item === "特色功能"}>
              {item}
            </MenuItem>
          ))}
        </Menu>
        <AppName>博易大师</AppName>
        <TitleButton $color="#f00000">
          <svg width="12" height="15" viewBox="0 0 12 15" aria-hidden="true">
            <path d="m8 0-8 8h4L2 15l10-9H7z" fill="#ff9010" stroke="#d07008" strokeWidth=".5" />
          </svg>
          交 易
        </TitleButton>
        <TitleButton $color="#606060">
          <svg width="20" height="14" viewBox="0 0 20 14" aria-hidden="true">
            <path d="M7 12C-1 7-1 1 4 1q2 0 3 3 1-3 4-3c4 0 4 6-4 11z" fill="#e83030" />
            <path d="M13 13c-7-4-6-9-3-9q2 0 3 2 1-3 4-2c4 1 2 6-4 9z" fill="#d82020" stroke="#ffb8b0" />
          </svg>
          心连心
        </TitleButton>
        <WindowButtons>
          <WindowButton aria-label="最小化">
            <svg width="12" height="14">
              <path d="M.500 8.500h11v3H.500z" fill="#fff" stroke="#a0a0a0" />
            </svg>
          </WindowButton>
          <WindowButton aria-label="最大化">
            <svg width="12" height="14">
              <path d="M.500 2.500h11v9H.500zM3.500 5.500h5v3h-5z" fill="#f4f4f4" stroke="#a0a0a0" />
            </svg>
          </WindowButton>
          <WindowButton aria-label="关闭">
            <svg width="12" height="14">
              <path d="M1 3h3l2 2 2-2h3L8 7l3 4H8L6 9l-2 2H1l3-4z" fill="#fff" stroke="#a0a0a0" />
            </svg>
          </WindowButton>
        </WindowButtons>
      </TitleBar>

      <ToolBar>
        {names.slice(0, 11).map((name) => (
          <Tool key={name} aria-label={name}>
            <Icon name={name} />
          </Tool>
        ))}
        <Divider />
        {names.slice(11).map((name) => (
          <Tool key={name} aria-label={name}>
            <Icon name={name} />
          </Tool>
        ))}
        <Tool>
          <Tile $tone="red" $small>
            Tick
          </Tile>
        </Tool>
        <Periods>
          {periods.slice(0, 13).map((period, i) => (
            <Period key={period} $active={i === 0}>
              <Tile $tone={i < 5 ? "gold" : "green"} $small={period.length > 2}>
                {period}
              </Tile>
            </Period>
          ))}
        </Periods>
        <Tool>
          <Tile $tone="green">Y</Tile>
        </Tool>
      </ToolBar>

      <Body>
        <SideBar>
          {sideTabs.map((tab, i) => (
            <SideTab key={tab} $active={i === 0}>
              <svg width="16" height="82" aria-hidden="true">
                <path
                  d={i === 0 ? "M16 .500H3L.500 3v68L16 79.500" : "M16 .500H3L.500 3v68L16 81.500"}
                  fill={i === 0 ? "#707070" : "#f0f0e8"}
                  stroke="#404040"
                />
                {i === 0 && <path d="M7 60v7l4-3.500z" fill="#fff" />}
              </svg>
              <span>{tab}</span>
            </SideTab>
          ))}
        </SideBar>

        <Charts>
          <ChartTitle>
            螺纹1705(010605)&lt;日线&gt;
            <ChartLink href="#overlay">商品叠加</ChartLink>
            <ChartLink href="#period">周期</ChartLink>
            {["M2 7.500 6 3v3h7v3H6v3z", "M14 7.500 10 3v3H3v3h7v3z", "M.500 9.500h10M10.500 1v13M13 3v10"].map((d, i) => (
              <TitleIcon key={d} aria-label={["左移", "右移", "布局"][i]}>
                <svg width="16" height="15" fill="none" stroke="#78b8ff">
                  <path d="M.500 .500h15v14H.500z" />
                  <path d={d} />
                </svg>
              </TitleIcon>
            ))}
          </ChartTitle>

          <Pane
            height={302}
            base={-8}
            axis={[["3500", 50], ["3000", 112], ["2500", 175], ["2000", 237]]}
            grid={[49, 111, 174, 236]}
            lines={priceLines}
            legend={[
              ["K", gray],
              ["MA5:3549.0000", white, 3],
              ["MA13:3520.0769", yellow],
              ["MA21:3524.3333", "#ff00ff"],
              ["MA34:3452.7353", "#00ff00"],
              ["MA55:3330.4364", "#8080ff"],
              ["MA_P6:3250.7303", "#ff8000"],
              ["MA144:2947.0069", "#000080"],
              ["MA233:2707.2532", "#800080"],
              ["DKX(10)", gray, 7],
              ["B:3530.9817", white],
              ["D:3514.3468", yellow],
              ["SSLO", gray, 7],
              ["3482.7500", "#ff00ff"],
              ["SAR(10,2,20)", gray, 7],
              ["3381.0512", "#00ff00"],
            ]}
            after={
              <>
                {parse(sar).map(([i, level]) => (
                  <circle key={i} cx={barX(i) + 0.5} cy={level / 3 - 8} r="2" fill="none" stroke="#00ff00" />
                ))}
                {trends.map(([x1, y1, x2, y2]) => (
                  <g key={x2} shapeRendering="crispEdges">
                    <line x1={x1} y1={y1} x2={x2} y2={y2} stroke="#d0d0d0" />
                    <line x1={x1} y1={y1} x2={x2} y2={y2} stroke="#9090d8" strokeDasharray="20 22" />
                  </g>
                ))}
                {bands.map(([y, x]) => (
                  <rect key={y} x={x} y={y} width="100%" height="10" fill="#ffff00" fillOpacity=".28" />
                ))}
                <g fill="#e0e0e0" stroke="none" fontFamily="Liberation Sans" fontWeight="bold" fontSize="12">
                  <text x="21" y="249">1935</text>
                  <text x="1108" y="30">3692</text>
                  <path d="M10 244.500h9M13 241.500l-3 3 3 3M1138 25.500h9M1144 22.500l3 3-3 3" fill="none" stroke="#e0e0e0" />
                </g>
              </>
            }
          >
            <Candles />
          </Pane>

          <Pane
            height={90}
            base={0}
            axis={[["400万", 36]]}
            grid={[35]}
            gridColor="#701010"
            lines={volLines}
            legend={[
              ["VOL(5,20)", gray],
              ["441152.0000", gray],
              ["MA1:1733426.0000", white],
              ["MA2:3115886.4000", yellow],
            ]}
          >
            <VolumeBars />
          </Pane>

          <Pane
            height={90}
            base={-90}
            axis={[["100", 27], ["80", 37], ["50", 51], ["20", 66], ["0", 76]]}
            grid={[26, 36, 50, 65, 75]}
            lines={kdjLines}
            legend={[
              ["KDJ(9,3,3)", gray],
              ["K:52.8441", white],
              ["D:60.8428", yellow],
              ["J:36.8467", "#ff00ff"],
            ]}
          />

          <Pane
            height={90}
            base={-180}
            tag="153"
            axis={[["0", 56]]}
            grid={[55]}
            lines={dmaLines}
            legend={[
              ["DMA(10,50,10)", gray],
              ["DDD:165.8000", white],
              ["AMA:199.1400", yellow],
            ]}
          />

          <Pane
            height={90}
            base={-270}
            axis={[["0", 48]]}
            grid={[47]}
            lines={shortLines}
            legend={[
              ["SHORT(10)", gray],
              ["SHORT:-13.5143", gray],
              ["-13.5143", white],
              ["MA1:-7.8659", yellow],
            ]}
          >
            <ShortBars />
          </Pane>

          <Pane
            height={91}
            fill
            selected
            base={-360}
            axis={[["100", 43], ["0", 59], ["-100", 75]]}
            grid={[42, 58, 74]}
            lines={cciLines}
            legend={[
              ["CCI(14)", gray],
              ["-43.3268", white],
            ]}
          />
        </Charts>

        <Quote>
          <QuoteTitle>螺纹1705(rb1705)</QuoteTitle>
          <QuoteIcon width="16" height="15" fill="none" stroke="#78b8ff" aria-hidden="true">
            <path d="M.500 .500h15v13H.500zM3.500 4.500h9v6h-9z" />
          </QuoteIcon>
          <Offer>
            卖出 <BigNumber>3488</BigNumber> <Amount>196</Amount>
          </Offer>
          <Offer>
            买入 <BigNumber>3487</BigNumber> <Amount>20</Amount>
          </Offer>
          <Stats>
            <tbody>
              {stats.map(([a, av, at, b, bv, bt]) => (
                <tr key={a}>
                  <th scope="row">{a}</th>
                  <Num $tone={at}>{av}</Num>
                  <th scope="row">{b}</th>
                  <Num $tone={bt}>{bv}</Num>
                </tr>
              ))}
            </tbody>
          </Stats>
          <Ticks>
            <colgroup>
              {[40, 65, 47, 49, 40].map((width, i) => (
                <col key={i} width={width} />
              ))}
            </colgroup>
            <thead>
              <tr>
                {["北京", "价格", "现手", "仓差", "性质"].map((label) => (
                  <th key={label} scope="col">
                    {label}
                  </th>
                ))}
              </tr>
            </thead>
            <tbody>
              {ticks.map(([time, price, lots, change, nature, tone], i) => (
                <tr key={i}>
                  <Time $full={time.length > 3}>{time}</Time>
                  <Num $tone="g">{price}</Num>
                  <Num $tone={tone}>{lots}</Num>
                  <Num $tone="y">{change}</Num>
                  <Nature $tone={tone}>{nature}</Nature>
                </tr>
              ))}
            </tbody>
          </Ticks>
        </Quote>
      </Body>
      <Badge>6</Badge>
    </Window>
  );
}
